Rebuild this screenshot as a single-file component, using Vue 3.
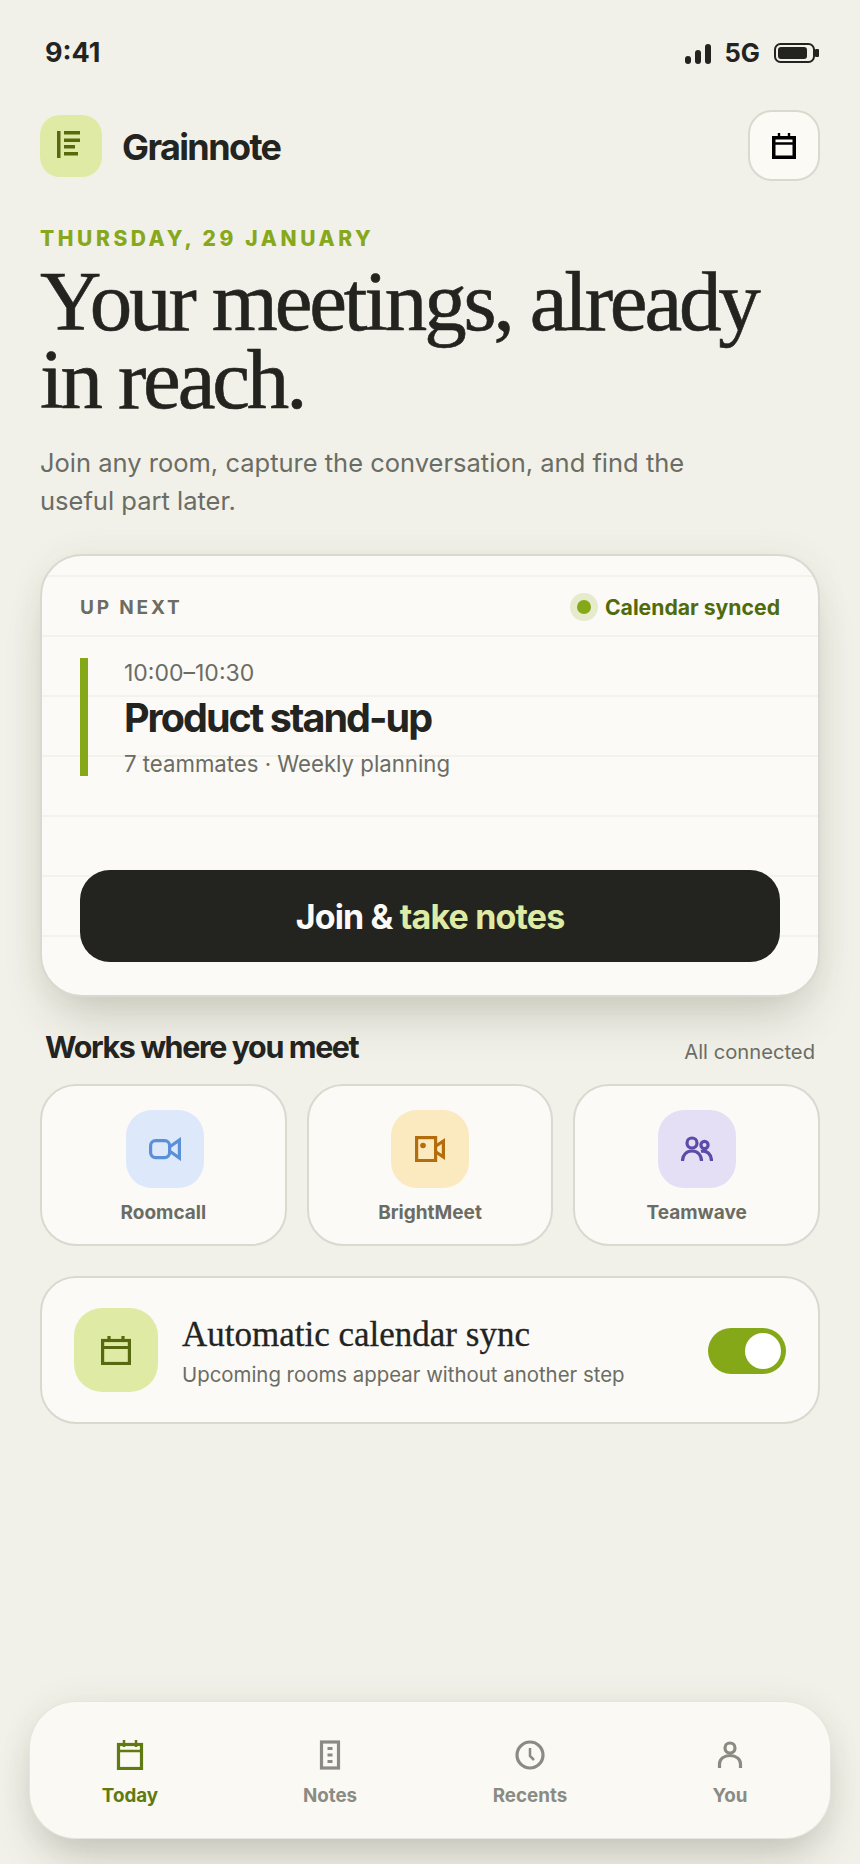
<script setup>
const apps = [
  { name: 'Roomcall', tint: 'blue' },
  { name: 'BrightMeet', tint: 'amber' },
  { name: 'Teamwave', tint: 'violet' }
]

const tabs = [
  { name: 'Today', active: true },
  { name: 'Notes' },
  { name: 'Recents' },
  { name: 'You' }
]
</script>

<template>
  <div class="screen">
    <div class="status">
      <span class="clock">9:41</span>
      <div class="status-right">
        <svg class="signal" width="26" height="20" viewBox="0 0 26 20">
          <rect x="0" y="12" width="6" height="8" rx="3" />
          <rect x="10" y="6" width="6" height="14" rx="3" />
          <rect x="20" y="0" width="6" height="20" rx="3" />
        </svg>
        <span class="network">5G</span>
        <svg class="battery" width="45" height="20" viewBox="0 0 45 20">
          <rect x="1" y="1" width="39" height="18" rx="5.5" fill="none" stroke="#23241f" stroke-width="2" />
          <rect x="4" y="4" width="29" height="12" rx="3" fill="#23241f" />
          <rect x="41" y="6" width="4" height="8" rx="1" fill="#23241f" />
        </svg>
      </div>
    </div>

    <header class="top">
      <div class="brand">
        <div class="logo">
          <svg width="23" height="27" viewBox="0 0 23 27" fill="#56690f">
            <rect x="0" y="0" width="3.500" height="27" />
            <rect x="7" y="0" width="16" height="3.500" />
            <rect x="7" y="7.500" width="16" height="3.500" />
            <rect x="7" y="14" width="11" height="3.500" />
            <rect x="7" y="21" width="14" height="3.500" />
          </svg>
        </div>
        <span class="brand-name">Grainnote</span>
      </div>
      <button class="cal-btn">
        <svg width="24" height="26" viewBox="0 0 24 26" fill="none" stroke="#000" stroke-width="3.5">
          <rect x="1.750" y="4.750" width="20.500" height="19.500" />
          <path d="M1.500 10.500h21M7 0v6M17 0v6" stroke-width="2.400" />
        </svg>
      </button>
    </header>

    <p class="date">THURSDAY, 29 JANUARY</p>
    <h1 class="headline">Your meetings, already in reach.</h1>
    <p class="lead">Join any room, capture the conversation, and find the useful part later.</p>

    <section class="next-card">
      <div class="next-head">
        <span class="next-label">UP NEXT</span>
        <span class="synced"><i class="dot"></i>Calendar synced</span>
      </div>
      <div class="meeting">
        <div class="meeting-time">10:00–10:30</div>
        <div class="meeting-title">Product stand-up</div>
        <div class="meeting-sub">7 teammates · Weekly planning</div>
      </div>
      <button class="join">Join &amp; <span>take notes</span></button>
    </section>

    <div class="works-head">
      <h2>Works where you meet</h2>
      <span>All connected</span>
    </div>
    <div class="apps">
      <div v-for="app in apps" :key="app.name" class="app">
        <div class="app-icon" :class="app.tint">
          <svg v-if="app.tint === 'blue'" width="32" height="24" viewBox="0 0 32 24" fill="none" stroke="#5b8fd6" stroke-width="3.2">
            <rect x="1.600" y="3.600" width="19" height="17" rx="5" />
            <path d="M20.500 10 30.400 3v18l-9.900-7" />
          </svg>
          <svg v-else-if="app.tint === 'amber'" width="30" height="26" viewBox="0 0 30 26" fill="none" stroke="#b36d0b" stroke-width="3.2">
            <rect x="1.600" y="1.600" width="19" height="23" />
            <circle cx="8" cy="9.500" r="2.800" fill="#b36d0b" stroke="none" />
            <path d="M21 10 28.400 5v16L21 16" />
          </svg>
          <svg v-else width="32" height="26" viewBox="0 0 32 26" fill="none" stroke="#5d4ba8" stroke-width="3.2">
            <circle cx="11" cy="7" r="5" />
            <circle cx="23.500" cy="9" r="3.600" />
            <path d="M1.500 25c0-6 4-10 9.500-10s9.500 4 9.500 10" />
            <path d="M20 15.500c5.500-1.500 10.500 2.500 10.500 9.500" />
          </svg>
        </div>
        <span class="app-name">{{ app.name }}</span>
      </div>
    </div>

    <section class="sync">
      <div class="sync-icon">
        <svg width="30" height="30" viewBox="0 0 30 30" fill="none" stroke="#56690f" stroke-width="3.2">
          <rect x="1.600" y="5.500" width="26.800" height="23" />
          <path d="M1.500 12.500h27M8 1v6M22 1v6" />
        </svg>
      </div>
      <div class="sync-text">
        <div class="sync-title">Automatic calendar sync</div>
        <div class="sync-sub">Upcoming rooms appear without another step</div>
      </div>
      <div class="toggle"><i></i></div>
    </section>

    <nav class="tabbar">
      <div v-for="tab in tabs" :key="tab.name" class="tab" :class="{ active: tab.active }">
        <svg width="30" height="30" viewBox="0 0 30 30" fill="none" stroke="currentColor" stroke-width="3.2">
          <template v-if="tab.name === 'Today'">
            <rect x="3.500" y="4.500" width="23" height="24" />
            <path d="M3.500 11h23M9 0v7M21 0v7" stroke-width="2.500" />
          </template>
          <template v-else-if="tab.name === 'Notes'">
            <rect x="6.500" y="2" width="17" height="26" />
            <path d="M12.500 8.500h5M12.500 15h5M12.500 21.500h5" stroke-width="3" />
          </template>
          <template v-else-if="tab.name === 'Recents'">
            <circle cx="15" cy="15" r="13" />
            <path d="M15 8v8l4 4" stroke-width="2.500" />
          </template>
          <template v-else>
            <circle cx="15" cy="8" r="5" />
            <path d="M4.500 28v-4c0-5 4.500-8.500 10.500-8.500s10.500 3.500 10.500 8.500v4" />
          </template>
        </svg>
        <span>{{ tab.name }}</span>
      </div>
    </nav>
  </div>
</template>

<style scoped>
.screen {
  height: 1864px;
  box-sizing: border-box;
  padding: 0 40px 26px 40px;
  display: flex;
  flex-direction: column;
  font-family: Inter, "Liberation Sans", sans-serif;
  color: #23241f;
  overflow: hidden;
}

.status {
  height: 105px;
  flex: none;
  display: flex;
  align-items: center;
  justify-content: space-between;
  padding: 0 1px 0 5px;
}

.clock {
  font-size: 27px;
  font-weight: 700;
}

.status-right {
  display: flex;
  align-items: center;
}

.signal {
  fill: #23241f;
  margin-top: 3px;
}

.network {
  font-size: 25.500px;
  font-weight: 700;
  margin: 0 14px;
}

.top {
  margin-top: 5px;
  display: flex;
  align-items: center;
  justify-content: space-between;
}

.brand {
  display: flex;
  align-items: center;
  gap: 20px;
}

.logo {
  width: 62px;
  height: 62px;
  border-radius: 20px;
  background: #dfeba4;
  display: flex;
  align-items: center;
  justify-content: center;
}

.logo svg {
  margin: 0 5px 3px 0;
}

.brand-name {
  font-size: 36px;
  font-weight: 700;
  letter-spacing: -0.045em;
  margin-top: 2px;
}

.cal-btn {
  width: 72px;
  height: 71px;
  padding: 0;
  box-sizing: border-box;
  border: 2px solid #d9d9cf;
  border-radius: 24px;
  background: #fbfaf5;
  display: flex;
  align-items: center;
  justify-content: center;
}

.date {
  margin: 45px 0 0;
  font-size: 21px;
  line-height: 26px;
  font-weight: 800;
  letter-spacing: 0.17em;
  color: #86a81a;
}

.headline {
  margin: 10px 0 0;
  font-family: "Liberation Serif", serif;
  font-size: 85px;
  line-height: 78px;
  font-weight: 400;
  letter-spacing: -0.037em;
  -webkit-text-stroke: 0.6px #23241f;
  width: 790px;
}

.lead {
  margin: 26px 0 0;
  font-size: 25.500px;
  line-height: 38px;
  color: #6b6c64;
  width: 680px;
}

.next-card {
  margin-top: 34px;
  height: 443px;
  flex: none;
  box-sizing: border-box;
  border: 2px solid #d9d9cf;
  border-radius: 42px;
  padding: 0 38px;
  background-color: #fbfaf6;
  background-image: linear-gradient(#f3f3ec 2px, transparent 2px);
  background-size: 100% 60px;
  background-position: 0 19px;
  box-shadow: 0 0 34px rgba(60, 62, 40, 0.06), 0 30px 50px -14px rgba(50, 52, 30, 0.2);
  display: flex;
  flex-direction: column;
}

.next-head {
  height: 102px;
  flex: none;
  display: flex;
  align-items: center;
  justify-content: space-between;
}

.next-label {
  font-size: 19px;
  font-weight: 700;
  letter-spacing: 0.15em;
  color: #6b6c64;
}

.synced {
  display: flex;
  align-items: center;
  font-size: 21.200px;
  font-weight: 700;
  color: #4f6b0b;
}

.dot {
  width: 14px;
  height: 14px;
  border-radius: 50%;
  background: #84a818;
  box-shadow: 0 0 0 7px #e6ebcc;
  margin-right: 14px;
}

.meeting {
  height: 118px;
  flex: none;
  box-sizing: border-box;
  border-left: 8px solid #84a818;
  padding: 1px 0 0 36px;
}

.meeting-time {
  font-size: 23px;
  line-height: 28px;
  color: #6b6c64;
}

.meeting-title {
  margin-top: 4px;
  font-size: 39.500px;
  line-height: 54px;
  font-weight: 700;
  letter-spacing: -0.05em;
}

.meeting-sub {
  margin-top: 4px;
  font-size: 22.200px;
  line-height: 30px;
  color: #6b6c64;
}

.join {
  margin-top: 94px;
  height: 92px;
  border: 0;
  border-radius: 30px;
  background: #23241f;
  color: #fbfaf6;
  font-family: inherit;
  font-size: 34px;
  font-weight: 700;
  letter-spacing: -0.025em;
}

.join span {
  color: #dfeba4;
}

.works-head {
  margin-top: 28px;
  height: 44px;
  flex: none;
  display: flex;
  align-items: center;
  justify-content: space-between;
  padding: 0 5px 0 5px;
}

.works-head h2 {
  margin: 0;
  font-size: 30.400px;
  font-weight: 700;
  letter-spacing: -0.045em;
}

.works-head span {
  font-size: 20.200px;
  color: #6b6c64;
  margin-top: 8px;
}

.apps {
  margin-top: 15px;
  display: grid;
  grid-template-columns: repeat(3, 1fr);
  gap: 20px;
}

.app {
  height: 162px;
  box-sizing: border-box;
  border: 2px solid #d9d9cf;
  border-radius: 36px;
  background: #fbfaf6;
  display: flex;
  flex-direction: column;
  align-items: center;
  padding-top: 24px;
}

.app-icon {
  width: 78px;
  height: 78px;
  border-radius: 26px;
  display: flex;
  align-items: center;
  justify-content: center;
}

.app-icon.blue { background: #dde8fb; margin-left: 3px; }
.app-icon.amber { background: #fbe9bf; }
.app-icon.violet { background: #e5dff6; }

.app-name {
  margin-top: 13px;
  font-size: 19px;
  line-height: 24px;
  font-weight: 700;
  color: #6b6c64;
}

.sync {
  margin-top: 30px;
  height: 148px;
  flex: none;
  box-sizing: border-box;
  border: 2px solid #d9d9cf;
  border-radius: 36px;
  background: #fbfaf6;
  display: flex;
  align-items: center;
  padding: 0 32px;
}

.sync-icon {
  width: 84px;
  height: 84px;
  flex: none;
  border-radius: 28px;
  background: #dfeba4;
  display: flex;
  align-items: center;
  justify-content: center;
}

.sync-text {
  flex: 1;
  margin-left: 24px;
}

.sync-title {
  font-family: "Liberation Serif", serif;
  font-size: 35px;
  line-height: 40px;
  margin-top: 3px;
  -webkit-text-stroke: 0.3px #23241f;
}

.sync-sub {
  margin-top: 7px;
  font-size: 20.400px;
  line-height: 26px;
  color: #6b6c64;
}

.toggle {
  width: 78px;
  height: 46px;
  flex: none;
  border-radius: 23px;
  background: #84a818;
  display: flex;
  align-items: center;
  justify-content: flex-end;
  padding-right: 5px;
  box-sizing: border-box;
  margin-top: 1px;
}

.toggle i {
  width: 36px;
  height: 36px;
  border-radius: 50%;
  background: #fff;
}

.tabbar {
  margin: auto -10px 0 -10px;
  height: 136px;
  flex: none;
  border-radius: 46px;
  background: #faf9f4;
  box-shadow: 0 0 0 1px #e6e6dc, 0 0 34px rgba(60, 62, 40, 0.07), 0 26px 44px -10px rgba(50, 52, 30, 0.22);
  display: grid;
  grid-template-columns: repeat(4, 1fr);
}

.tab {
  display: flex;
  flex-direction: column;
  align-items: center;
  padding-top: 38px;
  color: #8a8b83;
}

.tab.active {
  color: #5f7a10;
}

.tab span {
  margin-top: 14px;
  font-size: 18.800px;
  line-height: 24px;
  font-weight: 700;
}
</style>

<style>
body {
  background: #f1f1e9;
}
</style>
